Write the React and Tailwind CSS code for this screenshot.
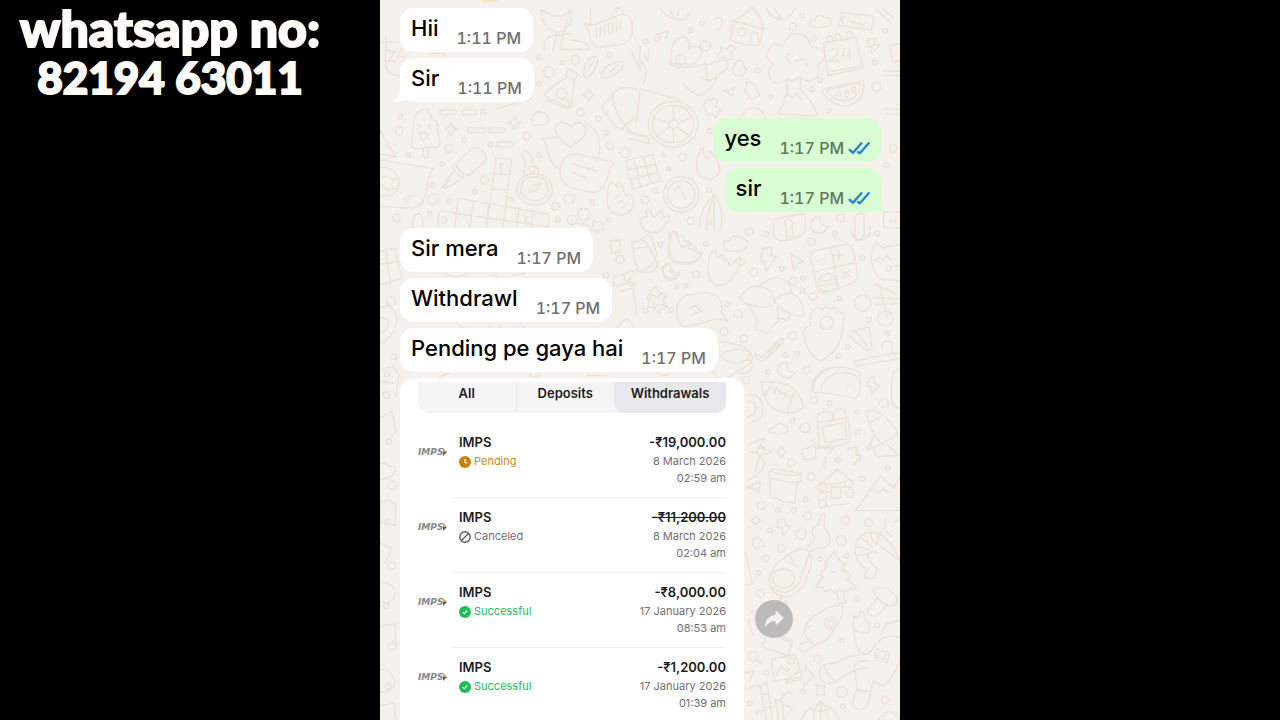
import React from "react";

const SENT = "sent";
const RECEIVED = "received";

const MESSAGE_GROUPS = [
  {
    from: RECEIVED,
    messages: [
      { text: "Hii", time: "1:11 PM" },
      { text: "Sir", time: "1:11 PM", tail: true },
    ],
  },
  {
    from: SENT,
    messages: [
      { text: "yes", time: "1:17 PM" },
      { text: "sir", time: "1:17 PM", tail: true },
    ],
  },
  {
    from: RECEIVED,
    messages: [
      { text: "Sir mera", time: "1:17 PM" },
      { text: "Withdrawl", time: "1:17 PM" },
      { text: "Pending pe gaya hai", time: "1:17 PM" },
    ],
  },
];

const TRANSACTIONS = [
  { id: 1, amount: "-₹19,000.00", date: "8 March 2026", time: "02:59 am", status: "Pending" },
  { id: 2, amount: "-₹11,200.00", date: "8 March 2026", time: "02:04 am", status: "Canceled" },
  { id: 3, amount: "-₹8,000.00", date: "17 January 2026", time: "08:53 am", status: "Successful" },
  { id: 4, amount: "-₹1,200.00", date: "17 January 2026", time: "01:39 am", status: "Successful" },
];

const STATUS_COLORS = {
  Pending: "text-[#cb8a1c]",
  Canceled: "text-[#707072]",
  Successful: "text-[#25bd5c]",
};

// loose dots between the doodles: [x, y, radius]
const DOTS = [
  [477, 170, 7], [548, 187, 6], [587, 179, 13], [508, 216, 16], [478, 250, 7], [688, 163, 7],
  [602, 336, 11], [656, 354, 7], [64, 349, 7], [60, 391, 12], [88, 462, 7], [208, 444, 11],
  [254, 418, 7], [333, 432, 7], [312, 334, 8], [441, 406, 12], [478, 463, 7], [690, 435, 11],
  [736, 456, 15], [680, 396, 7], [189, 490, 6], [161, 553, 7], [163, 595, 15], [315, 538, 12],
  [286, 572, 7], [210, 601, 6], [395, 596, 6], [527, 617, 11], [569, 594, 15], [637, 606, 7],
  [535, 656, 7], [577, 657, 14], [612, 641, 18], [686, 657, 6], [795, 597, 11], [826, 570, 7],
  [865, 504, 6], [850, 462, 6], [907, 470, 11], [932, 660, 11], [53, 650, 11], [152, 638, 7],
  [1237, 80, 11], [1264, 47, 7], [1300, 117, 6], [1131, 210, 7], [1171, 288, 6], [933, 90, 7],
  [965, 69, 6], [797, 124, 7], [1512, 92, 7], [1482, 187, 7], [1486, 259, 13], [1318, 239, 7],
  [1293, 267, 7], [1343, 330, 7], [988, 391, 7], [986, 568, 7], [986, 663, 7], [1517, 492, 7],
  [1537, 444, 11], [720, 775, 12], [678, 822, 8], [948, 820, 10], [890, 856, 5], [796, 929, 7],
  [872, 926, 6], [661, 850, 9], [1107, 692, 11], [1159, 700, 7], [1293, 722, 11], [1380, 651, 12],
  [1363, 699, 7], [1488, 698, 7], [841, 731, 7], [976, 728, 7], [1081, 782, 11], [1120, 813, 12],
  [1204, 802, 7], [1238, 841, 12], [1267, 831, 7], [1265, 867, 7], [1297, 886, 11], [1376, 892, 7],
  [1444, 771, 7], [1041, 908, 7], [1073, 938, 12], [917, 854, 6], [1031, 990, 12], [1090, 1012, 11],
  [1236, 1003, 12], [1213, 1060, 7], [1250, 1057, 7], [1373, 1063, 7], [1401, 1036, 7], [1463, 955, 7],
  [1520, 996, 7], [1162, 1111, 7], [1277, 1106, 11], [1097, 1136, 11], [1299, 1195, 11], [1346, 1204, 7],
  [1427, 1231, 6], [1508, 1203, 14], [1432, 1291, 7], [1273, 1277, 15], [1236, 1257, 7], [1232, 1383, 11],
  [1371, 1374, 7], [1292, 1424, 11], [1275, 1492, 7], [1445, 1430, 7], [1520, 1396, 7], [1143, 1510, 12],
  [1193, 1524, 7], [1239, 1524, 7], [1280, 1541, 12], [1394, 1555, 12], [1463, 1561, 12], [1261, 1596, 15],
  [1381, 1615, 15], [1202, 1639, 11], [1156, 1669, 11], [1168, 1585, 7], [1318, 1671, 7], [1397, 1660, 7],
  [1135, 1711, 7], [1140, 1773, 11], [1428, 1790, 7], [1384, 1913, 7], [1310, 1968, 11], [1383, 2067, 16],
  [1267, 2066, 6], [1157, 2009, 7], [1108, 2102, 7], [1512, 2091, 11], [1488, 1868, 7], [1388, 2110, 7],
  [45, 1065, 9], [24, 1118, 7], [22, 1180, 10], [36, 900, 13], [30, 1320, 8], [40, 1450, 12],
  [25, 1560, 7], [38, 1690, 11], [22, 1810, 8], [40, 1930, 12], [28, 2050, 8],
];

function Doodles() {
  return (
    <svg
      aria-hidden="true"
      viewBox="0 0 1560 2160"
      preserveAspectRatio="xMidYMin slice"
      className="absolute inset-0 h-full w-full"
      fill="none"
      stroke="#ebe2d8"
      strokeWidth="4"
      strokeLinejoin="round"
      strokeLinecap="round"
    >
      <ellipse cx="330" cy="0" rx="26" ry="6" fill="#f8e7bd" stroke="none" />
      {DOTS.map(([x, y, r], idx) => (
        <circle key={idx} cx={x} cy={y} r={r} />
      ))}
      {/* cat, soap and skates */}
      <path d="M485 28q0 60 50 68q45-8 40-68M485 28l30 20h35l25-20M495 148q-5-40 30-42l50-5M520 150l10-40M570 30l-30 118h90q-5-25-60-28M632 25v50" />
      <path d="M616 70q10 10 30 2l80-30q30 0 32 40q0 40-30 50l-70 10q-25-2-30-45q-5-15-12-27zM650 80v30M662 76v30M674 72v32M686 70v32M698 66v32M710 64v30M722 62v24M710 36q-5-15 5-12q15 5 14 18" />
      <path d="M612 225q0-50 35-57q15 10-5 45q-20 30-30 12zM625 205l18-22M664 228q10-40 60-45q15 15-15 37q-35 20-45 8zM690 215l25-20" />
      <path d="M565 205l30 15-10 20-28-14zM560 230l-66 48q0 12 12 14l62 30q10-5 8-20l8-65M530 280a16 16 0 1 0 32 0a16 16 0 1 0-32 0M755 150l25 60v-70" />
      <path d="M20 110v80q0 40 50 35h10M5 125h60M22 150l25 5-18 28h24M70 145l-18 25h24v22M150 160h45v10M350 325l105-30M500 300l60 22q20-10 0-25" />
      {/* ice lolly */}
      <path d="M97 430l8-70q5-35 40-34q0 15 12 18q-5 15 15 18l10 68q-5 10-14 9l-61 6q-8 0-10-15zM132 446v20q8 15 16 0v-22M114 372l10 6-10 6M156 372l-10 6 10 6M120 400q12-8 26-1q-4 20-13 18q-9 0-13-17z" />
      {/* dashes and stars */}
      <path d="M186 328h42q8 7 0 14h-42q-8-7 0-14zM249 328h40q8 7 0 14h-40q-8-7 0-14zM270 382h46q8 7 0 14h-46q-8-7 0-14zM332 382h42q8 7 0 14h-42q-8-7 0-14zM354 425h42q8 7 0 14h-42q-8-7 0-14z" />
      <path d="M215 366q5 18 20 20q-17 4-20 20q-4-16-19-20q15-3 19-20zM405 346q4 16 19 20q-16 4-19 20q-4-16-19-20q15-4 19-20zM626 264q4 16 18 20q-15 4-18 20q-4-16-18-20q14-4 18-20z" />
      <path d="M460 345q12-15 28-8q16 2 17 16q2 20-16 20l-26 1q-8-10-3-29zM0 385l42 70q10 8 6 14l-48-10" />
      {/* pen */}
      <path d="M230 490l50-48q15-5 35 12q10 20-2 34l-45 36q-30-10-38-34zM218 500l30 34q8-6 2-12l-26-30zM220 515l-32 46q25 0 50-22M190 562l20-24" />
      {/* speech bubbles */}
      <path d="M0 478l162 25q-10 15-14 35l-10 50q-10 30-38 34l-100-5M0 500q40-5 58 30q10 40-25 55l-33-2M10 530q8-8 14 0M35 535q8-5 12 3M10 552q10 20 40 10M72 598l20-15M82 602l22-20" />
      <path d="M486 414l44-4M486 414q15 10 18 35q5 40 34 55M572 438q-50-30-44-60q20-25 45 0q25-25 45 5q5 30-46 55zM615 370q40 10 44 60q2 25-8 52M545 490q10-30 45-30l114 26q-15 12-18 35q-15 55-50 54l-60-14q-45-15-31-71zM578 490l76 22M578 516l40 14" />
      {/* compass */}
      <path d="M412 566a52 46 0 1 0 106 0a52 46 0 1 0-106 0M424 564a41 36 0 1 0 82 0a41 36 0 1 0-82 0M436 524q-10-12 4-20l-14-44q8-20 22-4l16 38q18 10 12 28M448 505a9 9 0 1 0 18 0a9 9 0 1 0-18 0M450 575q0-20 30-28q0 25-30 28z" />
      {/* crossword */}
      <path d="M350 472l46 4-26 206M350 472l-28 204M343 518l46 4M337 565l46 4M236 592l272 48-6 44M236 592l-10 90M180 630l150 22 176 26M180 630l-5 50M282 600l-10 80M328 608l-8 70M418 622l-6 55M462 630l-8 50M360 490h12M364 488v22M188 650q10-5 14 4q-2 10-12 12M430 645l16 4-12 8 12 4-14 6" />
      <path d="M100 680q0-40 18-42q16 2 12 42M572 672q30-10 60 4M640 665q5-12 10 0q15-5 22 2q-8 10-2 20q-12 0-18 8q-5-10-18-8q8-12 6-22z" />
      {/* chocolate, hands, clock, flame */}
      <path d="M736 480l82-18 22 78-82 25zM762 474l20 82M790 468l22 80M742 508l84-18M750 536l84-20M690 545q10-5 22 15q0-30 12-10l14 35q18-15 22 20q0 30-34 38q-50 0-44-60q3-25 8-38zM708 590l12-8M716 606l14-8M725 620l14-8" />
      <path d="M850 581a53 53 0 1 0 106 0a53 53 0 1 0-106 0M862 581a41 41 0 1 0 82 0a41 41 0 1 0-82 0M880 570l20-14 16 40M950 500q-5-40 20-58q-2 20 12 32q10-10 8-22q30 30 28 58q-10 28-35 26q-35-8-33-36z" />
      <path d="M780 660q12-20 24-10l-8-22q18-5 24 22l24-20q15 8-2 26l22-14q10 12-8 26q-10 28-40 28q-30-2-36-36zM956 680q5-60 45-100q35 50 18 110M978 690q0-60 24-105M1002 690l-2-100" />
      {/* scooter wheel */}
      <path d="M805 371a74 68 0 1 0 148 0a74 68 0 1 0-148 0M818 371a61 56 0 1 0 122 0a61 56 0 1 0-122 0M866 371a14 13 0 1 0 28 0a14 13 0 1 0-28 0M880 315v43M880 384v43M866 368l-46-18M894 368l46-18M868 380l-38 28M892 380l38 28" />
      <path d="M665 320l45-50q40-20 70 5l-12 90M665 320l42 60 90 30M700 275q-10 50 50 115M725 385l40-35M780 265l90 25q30 5 35 18M745 395l55 12q15 15 2 22l-50-15M905 250l45 35q40 0 60-55M780 180q30 30 10 70M870 190q20 20 90 5q20-5 15-15M955 230q30 20 60-5l22-18M975 195l50-15q30 5 10 30l-50 35z" />
      <path d="M872 190v-35q10-45 35-45q25 5 18 35q20-15 35 0q10 20-5 30q-20 25-40 15q-15 10-30 0zM888 178a14 14 0 1 0 28 0a14 14 0 1 0-28 0" />
      {/* bee, note, house */}
      <path d="M840 25q20 28 50 35q25 5 35-20M870 28l12 28M895 30l-4 28M828 115q-4-15 10-15l4 12M842 100l22-8-6 24M838 112a7 7 0 1 1-12 4M808 145l-4 35q-12-8-8-20M1005 60q10-15 20-2q5 20-15 35M1048 92l6-28q40-15 60-42q30 25 35 65l-90-25M1062 68l-12 52q50 18 86 15l12-52M1072 95a12 12 0 1 0 24 0a12 12 0 1 0-24 0M1110 125l6-30q20-3 18 36" />
      <path d="M1157 25q15 35 50 33q25-5 35-33M1180 25l20 28M1287 75q-4-15 16-18q10-20 28-5q22 0 20 20q-5 8-20 8q-30 8-44-5zM1382 38l96 10-6 42-98-14zM1390 50q-10 8-5 18M1409 62a6 7 0 1 0 12 0M1424 65a6 7 0 1 0 12 0M1440 67a6 7 0 1 0 12 0M1485 28l45 40M1505 25l30 28M1462 115l22 0-6 18 18 2-26 26 4-20-14-2z" />
      <path d="M1020 140l18 8 12-15 15 12-14 15 8 16-18 4-12-10-14 6-4-14 12-8zM960 127l14-5 15 6 2 14-14 10-16-8z" />
      {/* volcano */}
      <path d="M1220 236q-50 30-55-15q-5-18 15-30q-30-15-15-45q20-25 45-8q5-40 42-38q35 5 38 42q45-5 42 30q-5 15-22 20q15 45-25 50q-20-5-25-15q-20 20-40 9zM1230 190q-30-30 5-30M1240 185q30-20 40 10M1222 236l-4 32M1262 232l-4 32q40 40 52 82l-118-6q20-30 30-75M1210 290l14-8 10 12 14-16 14 20" />
      {/* calendar and melon */}
      <path d="M1328 128l96-16 22 92-104 22zM1340 125q-8-18 6-18q12 2 8 18M1365 120q-8-18 6-18q12 2 8 18M1400 112q-8-18 6-18q12 2 8 18M1345 215l100-18M1350 150q20-12 22 5l-22 30 26-4M1392 145l-8 22 24-4M1404 142l4 38M1322 268l126-28q5 65-48 76q-50 5-78-48zM1336 270l102-22q-2 45-40 53q-40 2-62-31zM1368 285q0-12 8-12q8 8 0 14zM1392 288q0-14 10-14q6 10-4 16zM1412 272q0-10 10-14q6 8-2 18zM1526 135l34-5M1526 135l8 50 26-3M1508 212h52M1508 226h52M1515 326h45M1515 340h45" />
      <path d="M1062 200q0-20 16-20q14 3 14 22l8 6-16 20-22-6q-12-12 0-22zM1030 268l12 4 20-10-8 24zM1098 262q-2-18 10-18q14 2 16 16l14 24-26 14-20-28zM975 300q10-10 14 4l12-12 12 14-8 12 16 8-14 24-16-10-10 4-10-24zM1080 350q25-35 45-28q20 4 28 28" />
      {/* left edge, halfway down */}
      <path d="M0 750l48-8 20 90-68 20M0 790l60-10M20 745l15 105M0 920q40-20 55 30q-8 60-55 80M0 950q25-5 30 15q-5 25-30 30M10 1105q35-25 50 20l-10 60M0 1140l45 5M0 1250l38-20 14 60-30 30M0 1380l48 18q8 30-48 35M5 1500q30-15 44 10v60l-44-10zM0 1620l38 20-20 45M10 1740q35 0 38 38q-10 30-45 20M0 1870l50-5v62M0 2000q40-2 48 40q-8 30-45 28M0 2110l46-10 6 60" />
      {/* gift, bottle and hand signs */}
      <path d="M690 720l28-4 6 35-28 8zM755 725l34-10 12 14 30 54q4 20-20 30l-30 2q-10-5-12-20zM760 745l40-8M868 700q5-15 16-5l20 45 28-12 34 30q-15 30-62 26q-42-10-36-52zM850 795a26 26 0 1 0 50 20q-25 5-30-25q-14-4-20 5zM700 830l30-10 8 26-34 10zM735 820q20-20 30-5l-20 22 22 14q-15 8-28-12M720 870l40-10 10 80M700 1005q20-50 45-50q30 30 10 50M815 880l20 10 8-16 14 12-6 18 12 12-20 8-6 14-14-18-20-4z" />
      <path d="M866 770q0-70 15-80q12 0 10 22l14-10q12 8 8 18l14 2q6 12-2 18l36 18q-5 30-46 32q-35 0-49-20zM984 820q-2-60 14-72q10 0 14 20l16-8 2 20 12-4 6 20 30-30q8 14-6 40q-25 50-60 46q-25-4-28-32M780 715l30-15 22 60q-12 40-52 52" />
      <path d="M852 800a24 24 0 1 0 42 24q-28-2-24-34q-10 0-18 10zM810 870l18-14 10 18 24 6-14 14 10 20-22-6-12 14-4-22-18-8zM890 920q4-36 40-40q50-12 80 4q18 20 14 50l18 26-36-8q-35 15-90 24q-30-10-26-56zM928 925q12-20 26-5q10 8-4 14M930 945q15-12 40-18" />
      <path d="M1180 655l84-16q12 0 10 20l-2 36q-30 25-72 24q-25-8-22-40zM1212 660a14 14 0 1 1 22 18l5 28-22 4-2-28zM1290 665a26 26 0 1 0 52 12q-25 0-24-30q-22 0-28 18zM1422 650q10-20 28-8v60q-10 22-28 14zM1410 690q5 32 40 24q22-12 15-38M1508 633h50v48h-50zM1528 655a8 8 0 1 0 16 0M1030 735q-4-16 18-18q14-20 34-6q24 4 20 22q-12 18-50 18q-22-2-22-16zM1145 745l30-8-4 26 16 4-30 44-2-30-14 4zM1228 755l42 28-20 4-10 20z" />
      {/* calculator */}
      <path d="M1288 765q0-14 20-18l90-18q15 5 20 22l12 70q0 20-20 28l-75 26q-18 5-26-14zM1350 740l24 120M1300 812l124-28M1308 780l24-6M1360 762h28M1374 748v28M1384 810l24 14M1406 806l-18 24M1312 850a28 26 0 1 0 56-10a28 26 0 1 0-56 10M1312 842l52-8M1314 854l50-8" />
      <path d="M1470 765q5-20 15-40l20 15 30-5 24-8M1470 765q5 60 36 70l54 4M1482 780l12-12 12 10 12-14 12 12M1516 798q10-10 14 0q0 15-14 12zM1544 795q10-6 14 0M1480 850l70 30M1470 905a22 22 0 1 0 -50 0a22 22 0 1 0 50 0M1478 888l76 6q12 8 0 12l-72 4M1480 850q14-5 18 8l20 90M1490 952a23 23 0 1 0 46 0a23 23 0 1 0-46 0" />
      {/* mushrooms, paw, scissors */}
      <path d="M1078 892q20-40 60-36q40 4 44 50q-20 18-60 8q-25-4-44-22zM1135 855q25-25 60-25q35 10 38 45M1182 900q20-28 48-24q38 14 40 68q-30 4-60-18q-18-8-28-26zM1100 908l30 44-5 32 40 12q10-28 30-36l-5-40M1190 950l30 6q10-8 8-18M1268 1000q-2-20 22-28q-5-38 15-50q15-10 18 5q12-18 26-4q10-10 20 8q26-2 20 25l-6 40q-5 50-62 82q-40-14-53-78zM1318 965a20 20 0 1 0 40 0a20 20 0 1 0-40 0M1407 1005q2-12 14-16l44-14 8 65-16 8zM1420 985l40 52M1420 1080l100-22q30-4 40-2M1420 1080l4 14 136-24M1504 1045v-20q20-12 30 0v30" />
      <path d="M1122 1055l22 14 46-50 8 8-54 54-20-14zM1165 1050l38-38q10 0 6 8l-50 50M1000 1025q40-10 90 12q40 28 18 50l-70 45q-25 8-40-20M1020 1060q50-30 90-5q-10 30-44 30q-30-4-46-25zM1088 1078q30-8 28 14q-5 25-40 24M1195 1090a26 26 0 1 0 48 24q-28 0-24-32q-14 0-24 8z" />
      {/* football, taco, jar */}
      <path d="M1142 1142q55-8 96 18q22 20 30 56q-35 30-80 10q-40-20-46-84zM1154 1182l20-40M1220 1232l20-60M1178 1160l52 28M1188 1158l-6 16M1202 1164l-6 16M1216 1172l-6 16M1294 1170q0-60 60-72q50-5 80 14q12 45-8 78l-100-18q-25 4-32-2zM1320 1165q10-45 60-52q30-2 48 12M1298 1160q-4-10 6-20q0-15 14-18q4-14 20-14M1410 1148v4M1400 1160v4M1422 1160v4M1465 1128l16-2-2 20 16 4-22 26-4-22-10-2zM1535 1130q4-30 25-28M1532 1130v70q8 20 28 20" />
      <path d="M1310 1260q-4-28 14-26q6-8 16-2q8-6 16 4l-2 18M1358 1250q0-30 22-30q20 4 14 38M1310 1262l92-14 6 70q-40 24-92 16zM1326 1275l66-12 6 48-66 10zM1296 1310q4 30 60 30l-10 14M1456 1240q4-22 20-14q42 10 76 70l-50 30q-30-30-46-86zM1480 1300l-22 44 38-14M1470 1262l32-18M1402 1340l22-4 2 22 14 4-20 26M1165 1290q0-12 18-14q10-18 26-6q16 0 12 20q-30 12-56 0zM1203 1332q4 14 18 18q-14 4-18 18q-4-14-18-18q14-4 18-18zM1095 1180q40-10 50 30q10 40-30 50M1098 1200q25-5 30 18q-5 25-30 30M1098 1330l55-22-18 30 40 10-40 20-10 40M1108 1350q35 0 45 35q-10 30-50 50" />
      {/* flower pot, cabin, mountains */}
      <path d="M1168 1410q5-12 20-8l74 12v22l-12 4-8 64q-35-4-72-20l-4-64-2-10zM1166 1428q50 16 96 12M1170 1408q50 16 92 10M1128 1350l12-20 16 14-20 22zM1264 1360q-6-22 16-20q20-20 25 0v28l-36 6zM1402 1345l22-12 14 40-22 10M1290 1330q25 22 65-10M1470 1325l20 40 70-5M1520 1330l40 35" />
      <path d="M1318 1450l50-48 48 35M1312 1455a12 12 0 1 0 24 0a12 12 0 1 0-24 0M1312 1482a12 12 0 1 0 24 0a12 12 0 1 0-24 0M1314 1506a11 11 0 1 0 22 0a11 11 0 1 0-22 0M1392 1445a12 12 0 1 0 24 0a12 12 0 1 0-24 0M1395 1475a12 12 0 1 0 24 0a12 12 0 1 0-24 0M1336 1448l56-8M1336 1470h14M1380 1455h16M1336 1512l70-8M1350 1455h30v32h-30zM1335 1402q-10-16 0-22q6-8-2-14M1424 1525l74-102 40 35 22-38M1424 1525h136M1465 1466l14-4 14 12 12-14 18 10" />
      <path d="M1098 1455l42-16-6 32-14-12zM1112 1555l14-12 14 12-14 14zM1116 1612l18-8 20 26-26 10q-14-10-12-28zM1192 1550l20 2 2 18 14 4-20 24-6-24-12 2zM1095 1650l20 90q-10 12-18 8" />
      {/* avocado and guitar */}
      <path d="M1166 1730q8-30 30-54l48-32q30-12 48 12q4 30-10 60q-15 55-60 66q-55 0-56-52zM1176 1728a32 28 0 1 0 66 0a32 28 0 1 0-66 0M1176 1755q40 35 80-15l32-90M1230 1665l10 16M1225 1682l24 10M1278 1640l24-30q-20-30 10-42l12-34h8l-2 42q24 20 14 50q-14 16-34 10l-24 14" />
      <path d="M1360 1645q10 30 34 42l-14 8 32 26-14 8 28 26q-10 8-22 4l-12 10-16-8-14 10-14-10-14 8-10-14-20-2 24-32-12-2 24-30-10-4q20-20 30-40zM1370 1772v28l24 2-6-30M1350 1705l10 6M1380 1700l10 8" />
      {/* prawn and mushroom */}
      <path d="M1422 1650q0-55 48-60q50 0 86 85M1422 1650q8 40 40 52M1462 1702q-12 10-12 24l30 2 10-30q-24-12-30-40q10-16 26-8M1470 1590q-2 20 16 38l14-40M1440 1606l36 30M1424 1632l40 10M1426 1660l38-6M1498 1632l56 42M1515 1550q-12 30 15 52M1540 1560q10-8 20-8M1476 1762q40-20 70 22q4 20-10 26q-42-2-60-48zM1492 1785l-34 38q10 20 28 18l34-34M1202 1780q5 16 20 20q-15 4-20 18q-4-15-18-18q14-4 18-20z" />
      {/* rocket and astronaut */}
      <path d="M1272 1895q-4-40 40-62q40-28 72-24q8 30-20 66q-20 40-60 52q-25-14-32-32zM1332 1862a19 19 0 1 0 38 0a19 19 0 1 0-38 0M1341 1862a10 10 0 1 0 20 0a10 10 0 1 0-20 0M1290 1870l-18 10M1290 1910l-30 16q-10 24 12 22l28-18M1420 1900q-5-50 0-60l10 6 10-20q12 0 10 24q20 10 14 40M1422 1880q20 20 42 8M1422 1905q4 50 40 50l22-30q30-35 76-20M1504 1895q0-32 30-36l26-4M1458 1955q-50 0-90 25l-40 5q-20 14-8 44q20 20 40 8l50-30q30-10 50-12M1330 1985q5 30 28 45M1485 1940l40 10-6 30-38-8zM1495 1952l-6 12 14 2M1510 1955q10 4-4 16h12M1416 2110q0-35 14-50l-10-70q5-20 40-15M1416 2110q20 20 42 0l20-76q30 30 52-10l30-50M1425 2060l40 6" />
      <path d="M1110 1830l35-10M1104 1850l15 50M1160 1885l76 28-14 44-76-24zM1170 1895l58 22M1172 1970l72-14 20 66-84 14zM1222 1975a10 10 0 1 0 20 0a10 10 0 1 0-20 0M1186 2020l16-30 14 16 12-10M1215 2042q25-40 62-38l-4-16 26 30-30 32-2-18q-20-4-52 10zM1104 1960a14 14 0 1 0 28 0a14 14 0 1 0-28 0M1130 1972l12 12M1095 2010l24-5-10 30M1305 2046q16 8 28 2q-6 14 0 30q-14-6-26 0q4-16-2-32z" />
      {/* bamboo and globe */}
      <path d="M1138 2046l22-6 16 120M1138 2046l22 114M1144 2075l22-4M1152 2115l22-4M1140 2055q-25-15-34 2M1185 2090l20 4 6 66M1185 2090l10 70M1195 2094q20-30 40-24M1205 2110q20-8 30 10M1150 2125q-15-10-24 10M1264 2160a55 55 0 0 1 110 0M1320 2095v65M1285 2115q30 20 70 0M1298 2160q0-50 22-65q24 20 22 65M1494 2160q-5-20 14-22q10-20 28-6q22 0 18 28" />
      {/* behind and between the received bubbles */}
      <path d="M200 820q30 12 60 0M330 825q10-10 22 2M400 822l40-6M140 990q20-12 40 0M240 972l30 20M330 975q18 18 36 0M420 980q8-8 20 0M180 1125l30-8M450 1120q12 10 30 0M620 1122h60M830 1115q20 14 40 0" />
    </svg>
  );
}

function DoubleTick() {
  return (
    <svg viewBox="0 0 66 44" className="h-[15px] w-[22px]" fill="none" stroke="#2483d0" strokeWidth="7" strokeLinecap="round" aria-label="Read">
      <path d="M5 26l10 9 25-29M30 33l6 3 26-30" />
    </svg>
  );
}

function Bubble({ message, sent }) {
  return (
    <li
      className={`relative flex rounded-[14px] pb-1 pl-[11px] ${
        sent ? "bg-[#d9fdd3] pr-[11px]" : "bg-white pr-3"
      }`}
    >
      {message.tail && (
        <svg
          viewBox="0 0 16 12"
          aria-hidden="true"
          className={`absolute bottom-0 h-3 w-4 ${sent ? "-right-1.5 -scale-x-100 fill-[#d9fdd3]" : "-left-2 fill-white"}`}
        >
          <path d="M8 0q0 7-8 11.500q8 1.500 16-3z" />
        </svg>
      )}
      <p className="text-[22px] leading-10 font-medium text-black">{message.text}</p>
      <div className={`ml-[18px] flex items-center gap-1 self-end ${sent ? "text-[#5d7a5c]" : "text-[#707070]"}`}>
        <time className="text-base leading-5 font-medium tabular-nums">{message.time}</time>
        {sent && <DoubleTick />}
      </div>
    </li>
  );
}

function StatusIcon({ status }) {
  if (status === "Pending") {
    return (
      <svg viewBox="0 0 12 12" className="size-3" fill="none" aria-hidden="true">
        <circle cx="6" cy="6" r="6" fill="#c9800e" />
        <path d="M6 3v3.300l2.200 1" stroke="white" strokeWidth="1.200" />
      </svg>
    );
  }
  if (status === "Canceled") {
    return (
      <svg viewBox="0 0 12 12" className="size-3" fill="none" stroke="#5c5c5e" strokeWidth="1.400" aria-hidden="true">
        <circle cx="6" cy="6" r="5.200" />
        <path d="M2.500 9.500l7-7" />
      </svg>
    );
  }
  return (
    <svg viewBox="0 0 12 12" className="size-3" fill="none" aria-hidden="true">
      <circle cx="6" cy="6" r="6" fill="#1fbd56" />
      <path d="M3.800 6.200l1.500 1.500 3-3.200" stroke="white" strokeWidth="1.100" />
    </svg>
  );
}

function ImpsLogo() {
  return (
    <span className="flex w-[30px] shrink-0 items-center font-['DejaVu_Sans'] text-[9px] leading-3 font-bold text-[#85858a] italic">
      IMPS
      <svg viewBox="0 0 4 8" className="h-2 w-1 shrink-0" aria-hidden="true">
        <path d="M0 0l4 4H0z" fill="#d9a441" />
        <path d="M0 8l4-4H0z" fill="#4d6b35" />
      </svg>
    </span>
  );
}

function TransactionRow({ item }) {
  return (
    <li className="flex">
      <div className="pt-[23px]">
        <ImpsLogo />
      </div>
      <div className="ml-1 flex flex-1 justify-between border-b border-[#f1f1f2] pt-[9px] pb-2.5 pl-[7px]">
        <div>
          <p className="text-[13px] leading-5 font-semibold text-[#1c1c1e]">IMPS</p>
          <p className={`mt-px flex items-center gap-[3px] text-[11px] leading-[17px] ${STATUS_COLORS[item.status]}`}>
            <StatusIcon status={item.status} />
            {item.status}
          </p>
        </div>
        <div className="text-right text-[11px] leading-[17px] text-[#707072]">
          <p
            className={`text-[13px] leading-5 font-semibold text-[#1c1c1e] ${
              item.status === "Canceled" ? "line-through" : ""
            }`}
          >
            {item.amount}
          </p>
          <p className="mt-px">{item.date}</p>
          <p>{item.time}</p>
        </div>
      </div>
    </li>
  );
}

function TransactionsCard() {
  return (
    <section className="w-[344px] rounded-t-[14px] bg-white px-[18px] pt-1">
      <div className="flex h-[31px] rounded-b-[10px] bg-[#f5f5f6] text-[13px] font-semibold text-[#1c1c1e]">
        <button className="flex-1 border-r border-[#ebebec] pb-2">All</button>
        <button className="flex-1 pb-2">Deposits</button>
        <button className="w-28 rounded-b-[10px] bg-[#e8e8ea] pb-2">Withdrawals</button>
      </div>
      <ul className="mt-2.5">
        {TRANSACTIONS.map((item) => (
          <TransactionRow key={item.id} item={item} />
        ))}
      </ul>
    </section>
  );
}

function Chat() {
  return (
    <main className="relative overflow-hidden bg-[#f4f0eb]">
      <Doodles />
      <div className="relative flex min-h-full flex-col pt-2 pr-[19px] pl-5">
        {MESSAGE_GROUPS.map((group, idx) => (
          <ul
            key={idx}
            className={`flex flex-col gap-1.5 ${group.from === SENT ? "my-4 items-end" : "items-start"}`}
          >
            {group.messages.map((message) => (
              <Bubble key={message.text} message={message} sent={group.from === SENT} />
            ))}
          </ul>
        ))}
        <div className="mt-1.5 flex grow gap-[11px]">
          <TransactionsCard />
          <button
            aria-label="Forward"
            className="mt-[222px] flex size-[38px] items-center justify-center self-start rounded-full bg-[#bdbbb9]"
          >
            <svg viewBox="0 0 20 18" className="h-[18px] w-5" fill="#f4f2f0" aria-hidden="true">
              <path d="M11.500 1.500q.2-1 1.200-.3l6.300 6q.9.800 0 1.600l-6.300 6q-1 .7-1.200-.3v-3.200q-6.500-.2-9.500 5q-1 1-1-.6q.5-9.500 10.500-10.900z" />
            </svg>
          </button>
        </div>
      </div>
    </main>
  );
}

export default function App() {
  return (
    <div className="grid min-h-screen grid-cols-[19fr_26fr_19fr] bg-black font-['Inter',sans-serif]">
      <header className="pt-1 pr-10 text-center">
        <h1 className="flex flex-col font-['Lato',sans-serif] leading-[49px] font-black whitespace-nowrap text-white [-webkit-text-stroke:2px_#fffaf2]">
          <span className="text-[50px]">whatsapp no:</span>
          <span className="text-[44px]">82194 63011</span>
        </h1>
      </header>
      <Chat />
    </div>
  );
}
